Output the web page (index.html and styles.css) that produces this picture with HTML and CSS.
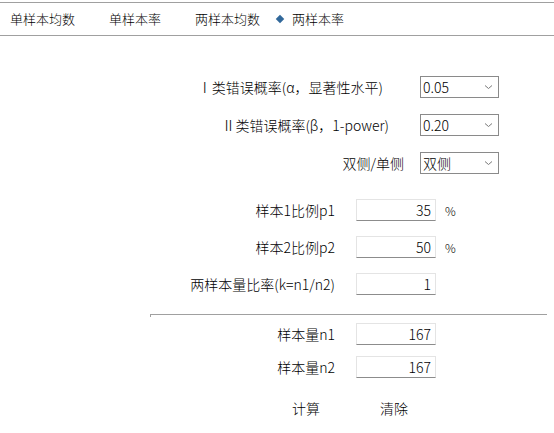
FILE: index.html
```html
<!DOCTYPE html>
<html lang="zh-CN">
<head>
  <meta charset="UTF-8" />
  <title>两样本率 样本量计算</title>
  <link rel="stylesheet" href="styles.css">
</head>
<body>

  <div class="tabs">
    <span class="tab">单样本均数</span>
    <span class="tab">单样本率</span>
    <span class="tab">两样本均数</span>
    <span class="tab active"><i class="dot"></i>两样本率</span>
  </div>

  <main class="form">
    <div class="group-sel">
      <div class="row">
        <label class="lbl lbl-a">Ⅰ类错误概率(α，显著性水平)</label>
        <div class="select"><span>0.05</span>
          <svg width="9" height="6" viewBox="0 0 9 6"><path d="M1 1.5 L4.5 4.5 L8 1.5" fill="none" stroke="#7a7a7a" stroke-width="1"/></svg>
        </div>
      </div>
      <div class="row">
        <label class="lbl lbl-b">Ⅱ类错误概率(β，1-power)</label>
        <div class="select"><span>0.20</span>
          <svg width="9" height="6" viewBox="0 0 9 6"><path d="M1 1.5 L4.5 4.5 L8 1.5" fill="none" stroke="#7a7a7a" stroke-width="1"/></svg>
        </div>
      </div>
      <div class="row">
        <label class="lbl">双侧/单侧</label>
        <div class="select"><span>双侧</span>
          <svg width="9" height="6" viewBox="0 0 9 6"><path d="M1 1.5 L4.5 4.5 L8 1.5" fill="none" stroke="#7a7a7a" stroke-width="1"/></svg>
        </div>
      </div>
    </div>

    <div class="group-in">
      <div class="row">
        <label class="lbl">样本1比例p1</label>
        <input class="num" type="text" value="35">
        <span class="unit">%</span>
      </div>
      <div class="row">
        <label class="lbl">样本2比例p2</label>
        <input class="num" type="text" value="50">
        <span class="unit">%</span>
      </div>
      <div class="row">
        <label class="lbl">两样本量比率(k=n1/n2)</label>
        <input class="num" type="text" value="1">
      </div>
    </div>

    <div class="sep"></div>

    <div class="group-out">
      <div class="row">
        <label class="lbl">样本量n1</label>
        <input class="num" type="text" value="167">
      </div>
      <div class="row">
        <label class="lbl">样本量n2</label>
        <input class="num" type="text" value="167">
      </div>
    </div>

    <div class="actions">
      <button>计算</button>
      <button>清除</button>
    </div>
  </main>

</body>
</html>
```

FILE: styles.css
```css
* {
  margin: 0;
  padding: 0;
  box-sizing: border-box;
}

body {
  font-family: "Noto Sans CJK SC", sans-serif;
  font-size: 14px;
  font-weight: 300;
  color: #000;
  background: white;
}

.tabs {
  display: flex;
  align-items: center;
  gap: 34px;
  margin-top: 2px;
  height: 34px;
  padding-left: 10px;
  border-top: 1px solid #a0a0a0;
  border-bottom: 1px solid #a0a0a0;
  font-size: 13px;
}

.tab {
  display: flex;
  align-items: center;
  line-height: 16px;
}

.tab.active {
  margin-left: -18px;
}

.dot {
  display: inline-block;
  width: 6px;
  height: 6px;
  margin: 0 9px 0 1px;
  background: #31689a;
  transform: rotate(45deg);
}

.form {
  padding-top: 40px;
}

.row {
  display: flex;
  align-items: center;
  height: 22px;
}

.lbl {
  text-align: right;
  white-space: nowrap;
}

/* selects */
.group-sel {
  display: flex;
  flex-direction: column;
  gap: 16px;
}

.group-sel .lbl {
  width: 404px;
  margin-right: 16px;
}

.group-sel .lbl-a {
  padding-right: 21px;
}

.group-sel .lbl-b {
  padding-right: 15px;
}

.select {
  display: flex;
  align-items: center;
  justify-content: space-between;
  width: 79px;
  height: 22px;
  padding: 0 5px 0 2px;
  border: 1px solid #8a8a8a;
  background: white;
}

/* inputs */
.group-in {
  display: flex;
  flex-direction: column;
  gap: 15px;
  margin-top: 25px;
}

.group-in .lbl,
.group-out .lbl {
  width: 335px;
  margin-right: 21px;
}

.num {
  width: 80px;
  height: 22px;
  padding: 0 4px;
  border: 1px solid #e4e4e4;
  border-bottom: 1px solid #8c8c8c;
  font: inherit;
  text-align: right;
  outline: none;
}

.unit {
  margin-left: 9px;
  font-size: 12px;
}

.sep {
  margin: 19px 7px 0 150px;
  height: 3px;
  border-top: 1px solid #a0a0a0;
  border-left: 1px solid #a0a0a0;
}

.group-out {
  display: flex;
  flex-direction: column;
  gap: 11px;
  margin-top: 6px;
}

.actions {
  display: flex;
  gap: 60px;
  margin-top: 20px;
  padding-left: 292px;
}

.actions button {
  font: inherit;
  line-height: 20px;
  background: none;
  border: none;
  cursor: pointer;
}
```
